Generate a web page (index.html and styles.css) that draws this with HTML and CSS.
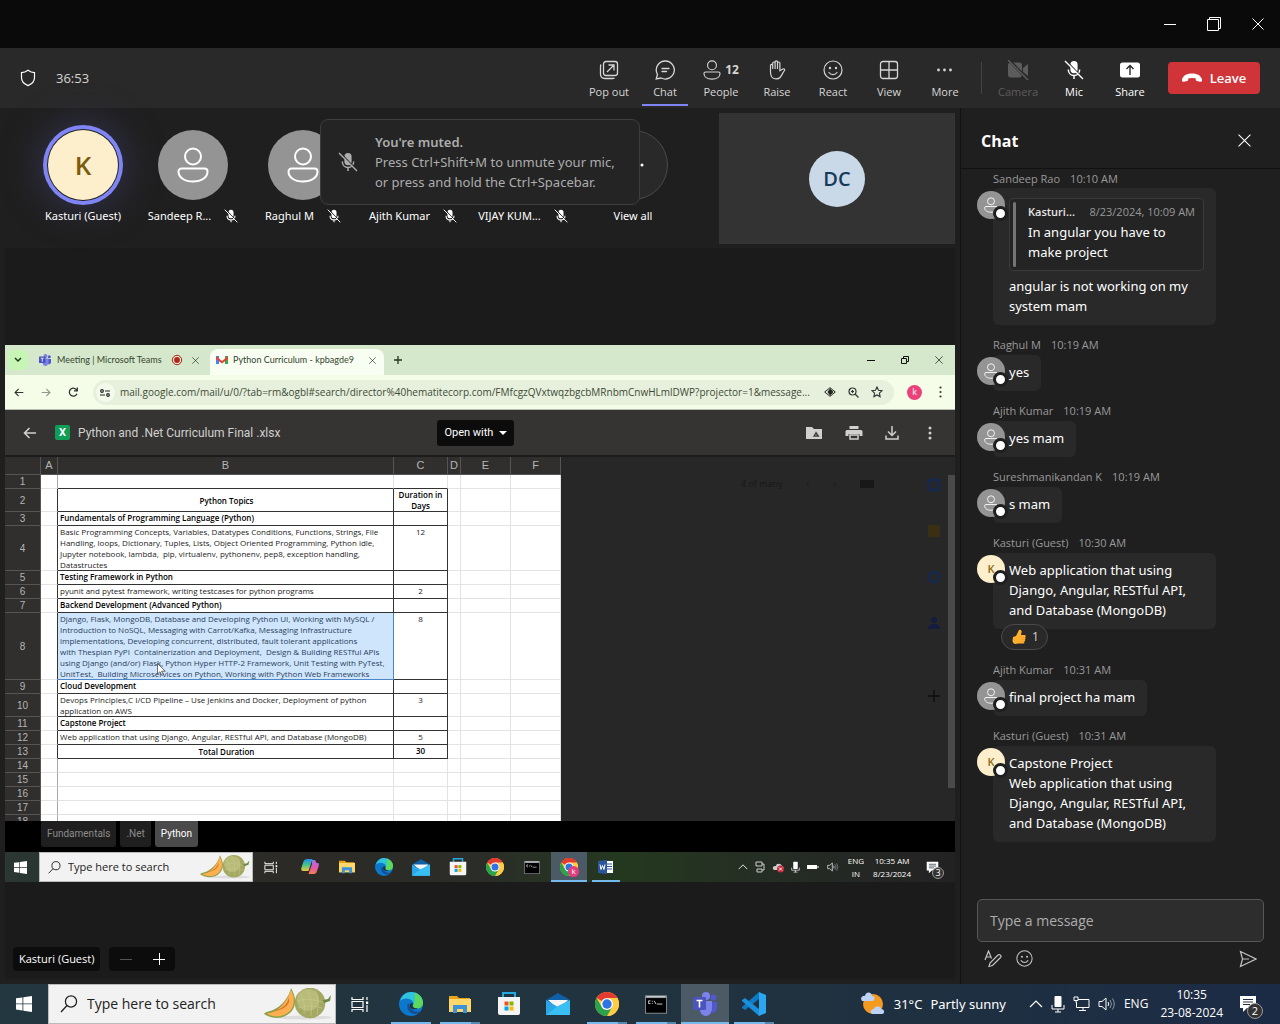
FILE: index.html
```html
<!DOCTYPE html>
<html lang="en">
<head>
<meta charset="utf-8">
<meta name="viewport" content="width=device-width, initial-scale=1">
<title>Meeting | Microsoft Teams</title>
<link rel="stylesheet" href="styles.css">
</head>
<body>
<svg class="defs" aria-hidden="true">
  <linearGradient id="cool" x2="0" y2="1"><stop offset="0" stop-color="#1f8fe8"/><stop offset=".5" stop-color="#45c58b"/><stop offset="1" stop-color="#f5c53a"/></linearGradient>
  <linearGradient id="warm" x2="0" y2="1"><stop offset="0" stop-color="#a66cf0"/><stop offset=".6" stop-color="#e858a5"/><stop offset="1" stop-color="#f5814d"/></linearGradient>
  <symbol id="person" viewBox="0 0 32 36"><circle cx="16" cy="9.500" r="8"/><path d="M4.500 21.500h23a3 3 0 0 1 3 3c0 6-6 10-14.500 10s-14.500-4-14.500-10a3 3 0 0 1 3-3z"/></symbol>
  <symbol id="mic-off" viewBox="0 0 20 20"><path d="M10 1a3.600 3.600 0 0 1 3.600 3.600v5A3.600 3.600 0 0 1 10 13.200a3.600 3.600 0 0 1-3.600-3.600v-5A3.600 3.600 0 0 1 10 1z" fill="currentColor"/><path d="M4.300 9.500c0 3.500 2.500 6 5.700 6s5.700-2.500 5.700-6M10 15.500V19" fill="none" stroke="currentColor" stroke-width="1.500"/><path d="M2 .5l17.500 18.500" class="gap-line"/><path d="M1 1l18 18" stroke="currentColor" stroke-width="1.400"/></symbol>
  <symbol id="smile" viewBox="0 0 20 20"><g fill="none" stroke="currentColor" stroke-width="1.200" stroke-linecap="round"><circle cx="10" cy="10" r="9"/><path d="M6 12.500c1 1.500 2.400 2.200 4 2.200s3-.7 4-2.200"/></g><circle cx="7" cy="8" r="1.200" fill="currentColor"/><circle cx="13" cy="8" r="1.200" fill="currentColor"/></symbol>
  <symbol id="cross" viewBox="0 0 12 12"><path d="M.5.5l11 11M11.500.5l-11 11" fill="none" stroke="currentColor"/></symbol>
  <symbol id="win" viewBox="0 0 16 16"><path d="M0 2.300l6.500-.9v6.100H0zM7.300 1.300L16 0v7.500H7.300zM0 8.300h6.500v6.200L0 13.600zM7.300 8.300H16V16l-8.700-1.300z" fill="#fff"/></symbol>
  <symbol id="search" viewBox="0 0 18 18"><g fill="none" stroke="currentColor" stroke-width="1.300"><circle cx="11" cy="6.500" r="5.600"/><path d="M7 10.500L1 17"/></g></symbol>
  <symbol id="melon" viewBox="0 0 68 32"><ellipse cx="40" cy="29.500" rx="28" ry="2" fill="#ddd"/><circle cx="46" cy="15" r="15.300" fill="#a3a862"/><circle cx="44" cy="12" r="11" fill="#b9bb79"/><path d="M36 6q6 8 4 20M43 2q6 9 4 26M51 2q5 9 2 25M33 13q12-4 25 1M34 20q12-4 24 0" fill="none" stroke="#c9ca8e" stroke-width=".6"/><path d="M59 12l5-1 3-4-1 6-6 2z" fill="#6c8a43"/><path d="M27 0c5 9 6 17 0 24-7 7-18 8-27 2 2-3 5-2 9-4C18 18 25 9 27 0z" fill="#8ba248"/><path d="M27 2c4 8 4 15-1 21-6 6-15 7-23 3 3-2 6-1 10-4 7-5 11-12 14-20z" fill="#ffaf51"/><path d="M25 7c0 8-5 14-19 17 8-1 16-3 19-10z" fill="#d9742b"/></symbol>
  <symbol id="taskview" viewBox="0 0 18 17"><path d="M1 1V3.500h11V1M1 16v-2.500h11V16M1 5.500h11v6H1zM16 1v3M16 9v7" fill="none" stroke="#fff" stroke-width="1.200"/><path d="M15 5.500h2.200v2.500H15z" fill="#fff"/></symbol>
  <symbol id="edge" viewBox="0 0 24 24"><circle cx="12" cy="12" r="12" fill="#0b78cc"/><path d="M1 9C3 3 7 0 12 0c7 0 12 5 12 10.500 0 4-3 6-6.500 6-3 0-4.500-1.500-3.500-3C17 9 8 3 1 9z" fill="#2fc3df"/><path d="M16 .7c5 2 8 6 8 10.300 0 3.500-3 5.500-6.500 5.500-3 0-4.500-1.500-3.500-3C17 9 15 5 16 .7z" fill="#5bd95c"/><path d="M9.500 11c-2.500 3-1 10 6 11 3 0 5-1 6-3-4 2-11 0-12-8z" fill="#174d91"/><path d="M14 12c-1.500 2 1 5 5 4.200-2 2-8 1.500-8.500-2.500 0-2.500 3-3.500 3.500-1.700z" fill="#203540"/></symbol>
  <symbol id="folder" viewBox="0 0 22 19"><path d="M0 1h8l2 2h11v13H0z" fill="#e7a51b"/><path d="M0 4h22v13H0z" fill="#ffd76a"/><path d="M4 18v-8h14v8h-4v-4H8v4z" fill="#3d93da"/></symbol>
  <symbol id="store" viewBox="0 0 24 24"><path d="M6 6V1h12v5" fill="none" stroke="#25a9e0" stroke-width="2"/><path d="M1 5h22v16a2 2 0 0 1-2 2H3a2 2 0 0 1-2-2z" fill="#f4f4f4"/><path d="M7.500 9.500h4v4h-4z" fill="#f25022"/><path d="M12.500 9.500h4v4h-4z" fill="#7fba00"/><path d="M7.500 14.500h4v4h-4z" fill="#00a4ef"/><path d="M12.500 14.500h4v4h-4z" fill="#ffb900"/></symbol>
  <symbol id="mail" viewBox="0 0 24 22"><path d="M0 7l12-7 12 7v4H0z" fill="#0f5fa9"/><path d="M2 7h20l-9 10z" fill="#f5f5f5"/><path d="M0 7l12 7 12-7v15H0z" fill="#29a7e8"/><path d="M0 22l12-9L24 7v15z" fill="#39bff2"/></symbol>
  <symbol id="chrome" viewBox="0 0 24 24"><circle cx="12" cy="12" r="12" fill="#fc4"/><path d="M12 12L1.600 6A12 12 0 0 1 22.400 6z" fill="#e33b2e"/><path d="M12 6h10.400A12 12 0 0 1 12 24l5.200-9z" fill="#fc4"/><path d="M1.600 6A12 12 0 0 0 12 24l5.200-9L12 18 6.800 15z" fill="#2ba24c"/><circle cx="12" cy="12" r="6" fill="#fff"/><circle cx="12" cy="12" r="4.700" fill="#2f74e6"/></symbol>
  <symbol id="console" viewBox="0 0 24 20"><path d="M0 0h24v20H0z" fill="#8b9095"/><path d="M1 3h22v16H1z" fill="#000"/><path d="M2 1.500h20" stroke="#dfe3e6"/><path d="M6 6H4v3h2M8 6v1M8 8.500v1M10 6l2 3.500M13 9.500h6" stroke="#ddd" fill="none"/></symbol>
  <symbol id="teams" viewBox="0 0 24 24"><circle cx="20.500" cy="5.500" r="3" fill="#5059c9"/><path d="M16 10h8v6c0 3-2 5-5 5z" fill="#5059c9"/><circle cx="13" cy="4" r="4" fill="#7b83eb"/><path d="M7 9h12v7c0 5-3 8-6 8s-6-2-6-7z" fill="#7b83eb"/><rect y="5" width="13" height="13" rx="1" fill="#4b53bc"/><path d="M3.500 8.500h6M6.500 8.500v7" stroke="#fff" stroke-width="1.600"/></symbol>
  <symbol id="vscode" viewBox="0 0 24 24"><path d="M17 0l7 3v18l-7 3z" fill="#2aa7ef"/><path d="M17 0v7L3 18l-3-2 0-1z" fill="#0f7ac4"/><path d="M17 24v-7L3 6 0 8v1z" fill="#1a8fdc"/></symbol>
  <symbol id="note" viewBox="0 0 18 18"><path d="M1 1h16v12H8l-4 4v-4H1z" fill="#fff"/><path d="M4 4.500h10M4 7h10M4 9.500h7" stroke="#22303e"/></symbol>
  <symbol id="mic" viewBox="0 0 14 18"><rect x="3.500" y="1" width="7" height="11" rx="1" fill="#fff"/><path d="M1 10v4h12v-4M7 14v3M4 17h6" fill="none" stroke="#fff"/></symbol>
  <symbol id="sound" viewBox="0 0 18 14"><path d="M1 4.500h3L8 1v12L4 9.500H1z" fill="none" stroke="#fff"/><path d="M10 5q1.500 2 0 4" fill="none" stroke="#fff"/><path d="M12 3q3 4 0 8M14.500 1.500q3.500 5.500 0 11" fill="none" stroke="#8b98a3"/></symbol>
  <symbol id="up" viewBox="0 0 14 8"><path d="M1 7l6-6 6 6" fill="none" stroke="#fff" stroke-width="1.200"/></symbol>
  <symbol id="back" viewBox="0 0 14 12"><path d="M13 6H1.500M6.500 1l-5 5 5 5" fill="none" stroke="currentColor" stroke-width="1.600"/></symbol>
</svg>

<header class="titlebar">
  <button class="win-btn" aria-label="Minimize"><svg width="12" height="12"><path d="M0 6.500h12" stroke="#fff"/></svg></button>
  <button class="win-btn" aria-label="Restore"><svg width="14" height="14"><path d="M.5 2.500h11v11H.5zM2.500 2.500v-2h11v11h-2" fill="none" stroke="#fff"/></svg></button>
  <button class="win-btn" aria-label="Close"><svg width="12" height="12"><use href="#cross"/></svg></button>
</header>

<nav class="toolbar" aria-label="Meeting controls">
  <svg width="16" height="18" viewBox="0 0 16 18"><path d="M8 1.200c2 1.500 4.200 2.300 6.500 2.400v5c0 4-2.500 6.500-6.500 8-4-1.500-6.500-4-6.500-8v-5C3.800 3.500 6 2.700 8 1.200z" fill="none" stroke="#fff" stroke-width="1.200"/></svg>
  <span class="timer">36:53</span>
  <div class="tools">
    <button class="tool"><svg width="20" height="20"><g fill="none" stroke="currentColor" stroke-width="1.300"><rect x="4.500" y="1.500" width="14" height="14" rx="2.500"/><path d="M2 4.500C1.500 5 1.500 6 1.500 7v7c0 3 1.500 4.500 4.500 4.500h7c1 0 2 0 2.500-.5M8 12l6.500-6.500M9.500 5h5.500v5.500"/></g></svg>Pop out</button>
    <button class="tool active"><svg width="20" height="20"><path d="M10.500 1a9 9 0 1 1-4.300 17L1.200 19l1.300-4.500A9 9 0 0 1 10.500 1zM7 8.500h7M7 11.500h4.500" fill="none" stroke="currentColor" stroke-width="1.300" stroke-linecap="round"/></svg>Chat</button>
    <button class="tool"><span class="tool-row"><svg width="18" height="20" class="line"><use href="#person"/></svg><b>12</b></span>People</button>
    <button class="tool"><svg width="20" height="20"><path d="M3.500 12V5.500c0-1.500 2.200-1.500 2.200 0V9 3.200c0-1.600 2.400-1.600 2.400 0V9 2c0-1.600 2.400-1.600 2.400 0v7V3.200c0-1.600 2.400-1.600 2.400 0v7.500l3-1.700c1.300-.6 2.200.5 1.600 1.500-2 2.700-2.800 5-4.500 7-1.600 1.800-6.500 1.900-8.200-.5-1-1.500-1.300-3-1.300-5z" fill="none" stroke="currentColor" stroke-width="1.200"/></svg>Raise</button>
    <button class="tool"><svg width="20" height="20"><use href="#smile"/></svg>React</button>
    <button class="tool"><svg width="20" height="20"><path d="M4 1.500h12A2.500 2.500 0 0 1 18.500 4v12a2.500 2.500 0 0 1-2.500 2.500H4A2.500 2.500 0 0 1 1.500 16V4A2.500 2.500 0 0 1 4 1.500zM10 1.500v17M1.500 10h17" fill="none" stroke="currentColor" stroke-width="1.300"/></svg>View</button>
    <button class="tool"><svg width="20" height="20" fill="currentColor"><circle cx="3.500" cy="10" r="1.400"/><circle cx="9.500" cy="10" r="1.400"/><circle cx="15.500" cy="10" r="1.400"/></svg>More</button>
    <span class="divider"></span>
    <button class="tool off" disabled><svg width="22" height="20" fill="currentColor"><rect x="1" y="2.500" width="14" height="15" rx="3"/><path d="M16 8l5-4v12l-5-4z"/><path d="M2 0l19 20" stroke="#292929" stroke-width="3"/><path d="M1 0l20 20" stroke="currentColor" stroke-width="1.400"/></svg>Camera</button>
    <button class="tool bright"><svg width="20" height="20"><use href="#mic-off"/></svg>Mic</button>
    <button class="tool bright"><svg width="20" height="20"><rect y="2.500" width="20" height="15" rx="2.500" fill="#fff"/><path d="M10 15V5.500M6.500 9L10 5.500 13.500 9" fill="none" stroke="#292929" stroke-width="1.400"/></svg>Share</button>
    <button class="leave"><svg width="20" height="10"><path d="M0 6.500C1 2 6 .5 10 .5s9 1.500 10 6c.2 1.800-.5 2.500-2 2.200l-3-.6c-1-.2-1.300-1-1.300-2.600C12 4.800 8 4.800 6.300 5.500 6.300 7 6 7.900 5 8.100l-3 .6C.5 9-.2 8.300 0 6.500z" fill="#fff"/></svg>Leave</button>
  </div>
</nav>

<div class="main">
  <main class="stage">
    <section class="strip" aria-label="Participants">
      <div class="roster">
        <div class="face"><span class="disc speaking">K</span><span class="who">Kasturi (Guest)</span></div>
        <div class="face"><span class="disc"><svg width="32" height="36" class="line"><use href="#person"/></svg></span><span class="who">Sandeep R...<svg width="14" height="14"><use href="#mic-off"/></svg></span></div>
        <div class="face"><span class="disc"><svg width="32" height="36" class="line"><use href="#person"/></svg></span><span class="who">Raghul M<svg width="14" height="14"><use href="#mic-off"/></svg></span></div>
        <div class="face"><span class="disc"><svg width="32" height="36" class="line"><use href="#person"/></svg></span><span class="who">Ajith Kumar<svg width="14" height="14"><use href="#mic-off"/></svg></span></div>
        <div class="face"><span class="disc"><svg width="32" height="36" class="line"><use href="#person"/></svg></span><span class="who">VIJAY KUM...<svg width="14" height="14"><use href="#mic-off"/></svg></span></div>
        <div class="face"><span class="disc all"><svg width="22" height="4" fill="#fff"><circle cx="2" cy="2" r="1.500"/><circle cx="11" cy="2" r="1.500"/><circle cx="20" cy="2" r="1.500"/></svg></span><span class="who">View all</span></div>
      </div>
      <div class="self"><span>DC</span></div>
      <div class="toast" role="status">
        <svg width="20" height="20"><use href="#mic-off"/></svg>
        <p><b>You're muted.</b><br>Press Ctrl+Shift+M to unmute your mic,<br>or press and hold the Ctrl+Spacebar.</p>
      </div>
    </section>

    <section class="share" aria-label="Shared screen">
      <div class="screen">
        <div class="tabs">
          <span class="tab-menu"><svg width="8" height="6"><path d="M1 1l3 3 3-3" fill="none" stroke="#1d3b17" stroke-width="1.500"/></svg></span>
          <div class="tab"><svg width="12" height="12"><use href="#teams"/></svg><span>Meeting | Microsoft Teams</span><svg width="12" height="12"><circle cx="6" cy="6" r="4.700" fill="none" stroke="#b3261e"/><circle cx="6" cy="6" r="2.900" fill="#b3261e"/></svg><svg class="x" width="7" height="7"><use href="#cross"/></svg></div>
          <div class="tab current"><svg width="12" height="10"><path d="M0 1h3v8H0z" fill="#4285f4"/><path d="M9 1h3v8H9z" fill="#34a853"/><path d="M0 1l6 5 6-5v3L6 8.500 0 4z" fill="#ea4335"/></svg><span>Python Curriculum - kpbagde9</span><svg class="x" width="7" height="7"><use href="#cross"/></svg></div>
          <svg width="8" height="8"><path d="M4 0v8M0 4h8" stroke="#26351f" stroke-width="1.300"/></svg>
          <div class="tab-win"><svg width="8" height="8"><path d="M0 4.500h8" stroke="#111"/></svg><svg width="8" height="8"><path d="M.5 2.500h5v5h-5zM2.500 2.500v-2h5v5h-2" fill="none" stroke="#111"/></svg><svg width="8" height="8"><use href="#cross"/></svg></div>
        </div>
        <div class="address">
          <svg width="10" height="9" viewBox="0 0 14 12"><use href="#back"/></svg>
          <svg class="flip" width="10" height="9" viewBox="0 0 14 12"><use href="#back"/></svg>
          <svg width="10" height="10"><path d="M9 3.500A4 4 0 1 0 9 6.800M9.300.5v3.300H6" fill="none" stroke="#333" stroke-width="1.300"/></svg>
          <div class="pill">
            <span class="site"><svg width="10" height="8"><g fill="none" stroke="#222" stroke-width="1.200"><circle cx="2" cy="2" r="1.300"/><circle cx="8" cy="6" r="1.300"/><path d="M5 2h5M0 6h5"/></g></svg></span>
            <span class="url">mail.google.com/mail/u/0/?tab=rm&amp;ogbl#search/director%40hematitecorp.com/FMfcgzQVxtwqzbgcbMRnbmCnwHLmlDWP?projector=1&amp;message...</span>
            <svg width="12" height="10"><path d="M.7 5L6 .7 11.300 5 6 9.300z" fill="none" stroke="#222"/><path d="M6 1.500L9.500 5 6 8.500 3.500 5z" fill="#222"/></svg>
            <svg width="11" height="11"><g fill="none" stroke="#333" stroke-width="1.200"><circle cx="4.500" cy="4.500" r="3.500"/><path d="M7 7l3.500 3.500M4.500 3v3M3 4.500h3"/></g></svg>
            <svg width="12" height="12"><path d="M6 1l1.500 3.300 3.500.4-2.600 2.400.7 3.500L6 8.900l-3.100 1.700.7-3.500L1 4.700l3.500-.4z" fill="none" stroke="#333" stroke-width="1.100"/></svg>
          </div>
          <span class="profile">k</span>
          <svg width="3" height="12" fill="#333"><circle cx="1.500" cy="1.500" r="1.100"/><circle cx="1.500" cy="6" r="1.100"/><circle cx="1.500" cy="10.500" r="1.100"/></svg>
        </div>
        <div class="viewer-bar">
          <svg width="14" height="12"><use href="#back"/></svg>
          <span class="xls">X</span>
          <span class="file">Python and .Net Curriculum Final .xlsx</span>
          <button class="open">Open with <svg width="8" height="4"><path d="M0 0h8L4 4z" fill="#fff"/></svg></button>
          <div class="viewer-tools">
            <svg width="18" height="14"><path d="M1 1h6l2 2h8v10H1z" fill="#d0d0d0"/><path d="M11 5l4 6H7.500zM11 8v2" fill="#353434" stroke="#d0d0d0" stroke-width=".6"/></svg>
            <svg width="18" height="14"><path d="M4.500 0h9v3h-9zM2 4h14a1.500 1.500 0 0 1 1.500 1.500V10h-3V8h-11v2H.5V5.500A1.500 1.500 0 0 1 2 4z" fill="#d0d0d0"/><path d="M5 9h8v4H5z" fill="none" stroke="#d0d0d0" stroke-width="1.500"/></svg>
            <svg width="14" height="14"><path d="M7 0v9M3 5.500l4 4 4-4M1 9.500V13h12V9.500" fill="none" stroke="#d0d0d0" stroke-width="1.500"/></svg>
            <svg width="18" height="14" fill="#d0d0d0"><circle cx="9" cy="2" r="1.500"/><circle cx="9" cy="7" r="1.500"/><circle cx="9" cy="12" r="1.500"/></svg>
          </div>
        </div>
        <div class="viewer">
          <div class="sheet">
            <table>
              <colgroup><col class="c0"><col class="ca"><col class="cb"><col class="cc"><col class="cd"><col class="ce"><col class="ce"></colgroup>
              <thead><tr><th></th><th>A</th><th>B</th><th>C</th><th>D</th><th>E</th><th>F</th></tr></thead>
              <tbody>
              <tr class="edge"><th>1</th><td></td><td></td><td></td><td></td><td></td><td></td></tr>
              <tr class="ink tall"><th>2</th><td></td><td class="mid bold">Python Topics</td><td class="bold">Duration in<br>Days</td><td></td><td></td><td></td></tr>
              <tr class="ink bold"><th>3</th><td></td><td>Fundamentals of Programming Language (Python)</td><td></td><td></td><td></td><td></td></tr>
              <tr class="ink"><th>4</th><td></td><td>Basic Programming Concepts, Variables, Datatypes Conditions, Functions, Strings, File
Handling, loops, Dictionary, Tuples, Lists, Object Oriented Programming, Python idle,
Jupyter notebook, lambda,  pip, virtualenv, pythonenv, pep8, exception handling,
Datastructes</td><td>12</td><td></td><td></td><td></td></tr>
              <tr class="ink bold"><th>5</th><td></td><td>Testing Framework in Python</td><td></td><td></td><td></td><td></td></tr>
              <tr class="ink"><th>6</th><td></td><td>pyunit and pytest framework, writing testcases for python programs</td><td>2</td><td></td><td></td><td></td></tr>
              <tr class="ink bold"><th>7</th><td></td><td>Backend Development (Advanced Python)</td><td></td><td></td><td></td><td></td></tr>
              <tr class="ink"><th>8</th><td></td><td class="picked">Django, Flask, MongoDB, Database and Developing Python UI, Working with MySQL /
Introduction to NoSQL, Messaging with Carrot/Kafka, Messaging Infrastructure
implementations, Developing concurrent, distributed, fault tolerant applications
with Thespian PyPI  Containerization and Deployment,  Design &amp; Building RESTful APIs
using Django (and/or) Flask, Python Hyper HTTP-2 Framework, Unit Testing with PyTest,
UnitTest,  Building Microservices on Python, Working with Python Web Frameworks<svg class="cursor" width="9" height="13"><path d="M.5.5v10.500l2.500-2.300 1.800 3.800 1.500-.8-1.700-3.500h3.700z" fill="#fff" stroke="#333" stroke-width=".7"/></svg></td><td>8</td><td></td><td></td><td></td></tr>
              <tr class="ink bold"><th>9</th><td></td><td>Cloud Development</td><td></td><td></td><td></td><td></td></tr>
              <tr class="ink"><th>10</th><td></td><td>Devops Principles,C I/CD Pipeline – Use Jenkins and Docker, Deployment of python
application on AWS</td><td>3</td><td></td><td></td><td></td></tr>
              <tr class="ink bold"><th>11</th><td></td><td>Capstone Project</td><td></td><td></td><td></td><td></td></tr>
              <tr class="ink"><th>12</th><td></td><td>Web application that using Django, Angular, RESTful API, and Database (MongoDB)</td><td>5</td><td></td><td></td><td></td></tr>
              <tr class="ink bold"><th>13</th><td></td><td class="mid">Total Duration</td><td>30</td><td></td><td></td><td></td></tr>
              <tr><th>14</th><td></td><td></td><td></td><td></td><td></td><td></td></tr>
              <tr><th>15</th><td></td><td></td><td></td><td></td><td></td><td></td></tr>
              <tr><th>16</th><td></td><td></td><td></td><td></td><td></td><td></td></tr>
              <tr><th>17</th><td></td><td></td><td></td><td></td><td></td><td></td></tr>
              <tr><th>18</th><td></td><td></td><td></td><td></td><td></td><td></td></tr>
              </tbody>
            </table>
          </div>
          <div class="behind">
            <div class="pager"><span>4 of many</span><span>‹</span><span>›</span><i></i></div>
            <div class="addons">
              <svg width="16" height="16"><path d="M3 3h10v10H3z" fill="none" stroke="#17284a" stroke-width="3"/></svg>
              <svg width="16" height="16"><path d="M2 2h12v12H2z" fill="#3a2f12"/></svg>
              <svg width="16" height="16"><circle cx="8" cy="8" r="5" fill="none" stroke="#15294a" stroke-width="3"/></svg>
              <svg width="16" height="16" fill="#141c40"><circle cx="8" cy="5" r="3"/><path d="M2 14c0-7 12-7 12 0z"/></svg>
              <svg class="plus" width="12" height="12"><path d="M6 0v12M0 6h12" stroke="#0c0c0d" stroke-width="1.300"/></svg>
            </div>
            <div class="scroll"></div>
          </div>
        </div>
        <div class="sheet-tabs"><button>Fundamentals</button><button>.Net</button><button class="on">Python</button></div>
        <div class="taskbar small">
          <span class="start"><svg width="13" height="13"><use href="#win"/></svg></span>
          <label class="find"><svg width="13" height="13"><use href="#search"/></svg><input type="text" placeholder="Type here to search" aria-label="Search shared desktop"><svg width="50" height="24"><use href="#melon"/></svg></label>
          <span class="app view"><svg width="14" height="13"><use href="#taskview"/></svg></span>
          <span class="app"><svg width="18" height="18"><path d="M10.500 2H14l1.500 3H17c1 0 1 2 .6 3.500l-2 5.500c-.5 1.500-2 2-3 2H7.500L11 6z" fill="url(#warm)"/><path d="M6 1h5.500L7.500 13H2C0 13 0 11 .5 9.500l2-6C3 2 4.500 1 6 1z" fill="url(#cool)"/></svg></span>
          <span class="app"><svg width="16" height="14"><use href="#folder"/></svg></span>
          <span class="app"><svg width="18" height="18"><use href="#edge"/></svg></span>
          <span class="app"><svg width="18" height="17"><use href="#mail"/></svg></span>
          <span class="app"><svg width="18" height="18"><use href="#store"/></svg></span>
          <span class="app"><svg width="18" height="18"><use href="#chrome"/></svg></span>
          <span class="app"><svg width="16" height="13"><use href="#console"/></svg></span>
          <span class="app on run"><svg width="18" height="18"><use href="#chrome"/></svg><i class="k">k</i></span>
          <span class="app run"><svg width="16" height="14"><path d="M7 1h8v12H7z" fill="#fff"/><path d="M9 4h5M9 6.500h5M9 9h5" stroke="#2b579a"/><path d="M0 1l9-1v14l-9-1z" fill="#2b579a"/><path d="M2 4.500l1 5 1.500-4L6 9.500l1-5" fill="none" stroke="#fff"/></svg></span>
          <div class="tray">
            <svg width="10" height="6"><use href="#up"/></svg>
            <svg width="10" height="12"><path d="M1 1h6v4H1zM2 8h5v3H2zM7 3h2v6H7" fill="none" stroke="#ccc"/></svg>
            <svg width="12" height="12"><path d="M1 8c-1-3 2-3 3-3 0-3 5-3 6 0 3 1 1 4 0 4H2z" fill="#ccc"/><circle cx="8.500" cy="8" r="3.500" fill="#c92a3b"/><path d="M7 6.500l3 3M10 6.500l-3 3" stroke="#fff"/></svg>
            <svg width="9" height="12"><use href="#mic"/></svg>
            <svg width="13" height="8"><path d="M0 2h10v4H0z" fill="#fff"/><path d="M11 3v2" stroke="#fff"/></svg>
            <svg width="12" height="10"><use href="#sound"/></svg>
            <span class="pair">ENG<br>IN</span>
            <span class="pair">10:35 AM<br>8/23/2024</span>
            <span class="alerts"><svg width="13" height="13"><use href="#note"/></svg><i>3</i></span>
          </div>
        </div>
      </div>
      <div class="share-foot"><span class="tag">Kasturi (Guest)</span><span class="zoom"><button aria-label="Zoom out" disabled><svg width="12" height="12"><path d="M0 6.500h12" stroke="#555"/></svg></button><button aria-label="Zoom in"><svg width="12" height="12"><path d="M0 6.500h12M6.500 0v12" stroke="#fff"/></svg></button></span></div>
    </section>
  </main>

  <aside class="chat">
    <header class="chat-head"><h2>Chat</h2><button aria-label="Close chat"><svg width="13" height="13"><use href="#cross"/></svg></button></header>
    <div class="log">
      <article class="msg"><p class="meta"><span>Sandeep Rao</span><time>10:10 AM</time></p><span class="ava"><svg width="14" height="16" class="line"><use href="#person"/></svg></span>
        <div class="bubble"><blockquote><p class="meta"><b>Kasturi...</b><time>8/23/2024, 10:09 AM</time></p>In angular you have to<br>make project</blockquote>angular is not working on my<br>system mam</div></article>
      <article class="msg"><p class="meta"><span>Raghul M</span><time>10:19 AM</time></p><span class="ava"><svg width="14" height="16" class="line"><use href="#person"/></svg></span><div class="bubble">yes</div></article>
      <article class="msg"><p class="meta"><span>Ajith Kumar</span><time>10:19 AM</time></p><span class="ava"><svg width="14" height="16" class="line"><use href="#person"/></svg></span><div class="bubble">yes mam</div></article>
      <article class="msg"><p class="meta"><span>Sureshmanikandan K</span><time>10:19 AM</time></p><span class="ava"><svg width="14" height="16" class="line"><use href="#person"/></svg></span><div class="bubble">s mam</div></article>
      <article class="msg"><p class="meta"><span>Kasturi (Guest)</span><time>10:30 AM</time></p><span class="ava k">K</span><div class="bubble wide">Web application that using<br>Django, Angular, RESTful API,<br>and Database (MongoDB)</div>
        <button class="react"><svg width="14" height="16"><path d="M1 8l3-1 3-6c2-1 3 1 2.500 2.500L9 6h3.500c1.500 0 1.500 2 .5 2.300 1 .4.700 2-.3 2.200.8.5.5 1.800-.5 2 .5.8 0 2-1.200 2H6C3 15.500 1 15 .5 12z" fill="#ffb02e"/><path d="M8.500 8.500h4M8.500 10.700h4M8.500 12.800h3.500" stroke="#f28c1d" stroke-width=".6"/></svg>1</button></article>
      <article class="msg"><p class="meta"><span>Ajith Kumar</span><time>10:31 AM</time></p><span class="ava"><svg width="14" height="16" class="line"><use href="#person"/></svg></span><div class="bubble">final project ha mam</div></article>
      <article class="msg"><p class="meta"><span>Kasturi (Guest)</span><time>10:31 AM</time></p><span class="ava k">K</span><div class="bubble wide">Capstone Project<br>Web application that using<br>Django, Angular, RESTful API,<br>and Database (MongoDB)</div></article>
    </div>
    <form class="compose">
      <input type="text" placeholder="Type a message" aria-label="Type a message">
      <div class="compose-tools">
        <button type="button" aria-label="Format"><svg width="18" height="18"><g fill="none" stroke="#c4c4c4" stroke-width="1.200"><path d="M1 10L4.500 1 7.500 8.500M2.300 7h4M5 16.500l1-3.500 8-8c1.500-1.300 4 .8 2.500 2.500L8.500 15.500z"/></g></svg></button>
        <button type="button" aria-label="Emoji"><svg width="17" height="17"><use href="#smile"/></svg></button>
        <button type="button" class="send" aria-label="Send"><svg width="18" height="18"><path d="M1.500 1.500l15.500 7.500-15.500 7.500 2-7.500zM3.500 9H10" fill="none" stroke="#c4c4c4" stroke-width="1.200"/></svg></button>
      </div>
    </form>
  </aside>
</div>

<footer class="taskbar">
  <span class="start"><svg width="16" height="16"><use href="#win"/></svg></span>
  <label class="find"><svg width="18" height="18"><use href="#search"/></svg><input type="text" placeholder="Type here to search" aria-label="Search"><svg width="68" height="32"><use href="#melon"/></svg></label>
  <span class="app view"><svg width="18" height="17"><use href="#taskview"/></svg></span>
  <span class="app run"><svg width="24" height="24"><use href="#edge"/></svg></span>
  <span class="app run many"><svg width="22" height="19"><use href="#folder"/></svg></span>
  <span class="app"><svg width="24" height="24"><use href="#store"/></svg></span>
  <span class="app"><svg width="24" height="22"><use href="#mail"/></svg></span>
  <span class="app run many"><svg width="24" height="24"><use href="#chrome"/></svg></span>
  <span class="app run many"><svg width="22" height="19"><use href="#console"/></svg></span>
  <span class="app run on"><svg width="24" height="24"><use href="#teams"/></svg></span>
  <span class="app run many"><svg width="24" height="24"><use href="#vscode"/></svg></span>
  <div class="tray">
    <span class="weather"><svg width="26" height="24"><circle cx="13" cy="12" r="10" fill="#f39a1f"/><path d="M2 9c-3-4 2-6 3-5 1-5 7-4 7 0 4 0 3 5 0 5z" fill="#bcd3f7"/><path d="M12 22c-3-3 0-5 2-5 1-4 7-3 7 0 4 0 4 5 1 5z" fill="#bcd3f7"/></svg><span>31°C</span><span>Partly sunny</span></span>
    <svg width="14" height="8"><use href="#up"/></svg>
    <svg width="14" height="18"><use href="#mic"/></svg>
    <svg width="17" height="16"><path d="M5 3.500h11v8H3.500V6M10 11.500v3M6 14.500h7M1 1h4v3.500H1zM3 4.500v2" fill="none" stroke="#fff"/></svg>
    <svg width="18" height="14"><use href="#sound"/></svg>
    <span class="lang">ENG</span>
    <span class="clock">10:35<br>23-08-2024</span>
    <span class="alerts"><svg width="18" height="18"><use href="#note"/></svg><i>2</i></span>
  </div>
</footer>
</body>
</html>
```
FILE: styles.css
```css
*, *::before, *::after { box-sizing: border-box; }
body { margin: 0; min-height: 100vh; display: flex; flex-direction: column; background: #1f1f1f; color: #fff; font: 13px/20px "Open Sans", "Noto Sans", sans-serif; }
button, input { font: inherit; color: inherit; background: none; border: 0; padding: 0; }
svg { flex: none; display: block; }
p, h2, blockquote { margin: 0; }
i { font-style: normal; }
.defs { position: absolute; width: 0; height: 0; }
.line { fill: none; stroke: currentColor; stroke-width: 2; }
.gap-line { stroke: #242424; stroke-width: 1.5; }

.titlebar { display: flex; justify-content: flex-end; height: 48px; background: #0a0a0a; }
.win-btn { width: 44px; display: flex; align-items: center; justify-content: center; }

/* meeting toolbar */
.toolbar { display: flex; align-items: center; height: 60px; padding: 0 20px; background: #292929; color: #d6d6d6; }
.timer { margin-left: 20px; }
.tools { display: flex; align-items: center; margin-left: auto; }
.tool { width: 56px; height: 60px; padding-top: 12px; display: flex; flex-direction: column; align-items: center; gap: 2px; font-size: 11px; position: relative; }
.tool.active::after { content: ""; position: absolute; bottom: 2px; left: 5px; width: 46px; height: 2px; background: #7f85f5; }
.tool.off { color: #5c5c5c; }
.tool.bright { color: #fff; }
.tool-row { display: flex; gap: 4px; height: 20px; }
.tool-row b { font-size: 12px; }
.divider { width: 1px; height: 32px; margin: 0 8px; background: #454545; }
.leave { display: flex; align-items: center; justify-content: center; gap: 8px; width: 92px; height: 32px; margin-left: 10px; border-radius: 4px; background: #d13438; color: #fff; font-weight: 600; }

.main { flex: 1; display: flex; }
.stage { flex: 1; min-width: 0; padding: 5px; display: flex; flex-direction: column; gap: 4px; }
.strip { position: relative; display: flex; justify-content: space-between; height: 131px; }
.roster { display: flex; padding: 17px 0 0 23px; }
.face { width: 110px; display: flex; flex-direction: column; align-items: center; gap: 6px; }
.disc { width: 70px; height: 70px; border-radius: 50%; background: #949494; display: flex; align-items: center; justify-content: center; }
.disc.speaking { background: #fdefcb; color: #7d5a0c; font-size: 26px; font-weight: 600; box-shadow: 0 0 0 1px #222, 0 0 0 5px #7f85f5, 0 0 36px 8px #34334f; }
.disc.all { background: #292929; border: 1px solid #4a4a4a; }
.who { display: flex; align-items: center; gap: 13px; font-family: "Noto Sans", sans-serif; font-size: 11px; white-space: nowrap; }
.self { width: 236px; background: #333; display: flex; align-items: center; justify-content: center; }
.self span { width: 56px; height: 56px; line-height: 56px; text-align: center; border-radius: 50%; background: #c9d9e8; color: #17395a; font-size: 20px; font-weight: 600; }
.toast { position: absolute; left: 315px; top: 6px; width: 320px; height: 86px; padding: 12px 17px; display: flex; align-items: center; gap: 17px; background: #242424; border: 1px solid #3d3d3d; border-radius: 8px; color: #adadad; font-family: "Noto Sans", sans-serif; white-space: nowrap; }
.toast b { font-weight: 600; }

/* shared screen */
.share { flex: 1; display: grid; grid-template-rows: 1fr auto 1fr; background: #1b1b1b; }
.screen { grid-row: 2; min-width: 0; }
.share-foot { grid-row: 3; display: flex; align-self: end; gap: 9px; padding: 8px; }
.tag, .zoom { height: 24px; border-radius: 4px; background: #0c0c0c; }
.tag { padding: 2px 6px; font-size: 11px; font-weight: 500; }
.zoom { display: flex; width: 66px; }
.zoom button { flex: 1; display: flex; align-items: center; justify-content: center; }

.tabs { display: flex; align-items: center; height: 30px; padding: 0 12px 0 3px; background: #d6e8cb; color: #35442e; font: 9px/20px Lato, "Open Sans", sans-serif; }
.tab-menu { width: 20px; height: 20px; padding: 7px 6px; border-radius: 6px; background: #c7f5b5; }
.tab { display: flex; align-items: center; width: 182px; gap: 6px; padding: 0 11px; white-space: nowrap; }
.tab span { flex: 1; }
.tab.current { width: 174px; height: 26px; align-self: flex-end; padding: 0 8px 4px 6px; gap: 5px; margin-right: 10px; background: #f8fef2; border-radius: 8px 8px 0 0; }
.x { margin-left: 3px; color: #111; }
.tab-win { display: flex; gap: 26px; margin-left: auto; color: #111; }
.address { display: flex; align-items: center; height: 35px; gap: 17px; padding: 0 13px 0 9px; background: #f5fde9; color: #333; border-bottom: 1px solid #b9beb2; }
.flip { transform: rotate(180deg); opacity: .5; }
.pill { flex: 1; min-width: 0; display: flex; align-items: center; gap: 12px; height: 25px; margin: 0 -4px 0 -2px; padding: 0 11px 0 3px; border-radius: 13px; background: #e6f0dc; color: #3f4a38; font-size: 10px; }
.site { width: 19px; height: 19px; padding: 6px 4px; border-radius: 50%; background: #f3faec; }
.url { flex: 1; margin-left: -7px; white-space: nowrap; overflow: hidden; }
.profile { width: 15px; height: 15px; border-radius: 50%; background: #ec407a; color: #fff; font-size: 9px; line-height: 14px; text-align: center; }
.viewer-bar { display: flex; align-items: center; height: 47px; padding: 0 16px 0 18px; background: #353432; border-bottom: 2px solid #1b1b1b; color: #d0d0d0; font: 11px/20px Roboto, sans-serif; }
.xls { width: 15px; height: 15px; margin: 0 8px 0 18px; border-radius: 2px; background: #0f9d58; color: #fff; font-weight: 700; line-height: 15px; text-align: center; }
.file { font-size: 12px; }
.open { display: flex; align-items: center; gap: 6px; margin-left: 157px; padding: 3px 7px; background: #0c0c0c; color: #fff; border-radius: 3px; }
.viewer-tools { display: flex; gap: 22px; margin-left: auto; }

.viewer { display: flex; height: 364px; overflow: hidden; background: #282728; }
table { width: 556px; table-layout: fixed; border-collapse: separate; border-spacing: 0; }
.c0 { width: 36px; } .ca { width: 17px; } .cb { width: 336px; } .cc { width: 54px; } .cd { width: 13px; } .ce { width: 50px; }
th { padding: 0; background: #302f2e; color: #b5b5b5; border-right: 1px solid #555; border-bottom: 1px solid #555; font: 10px/13px "Liberation Sans", sans-serif; }
thead th { height: 18px; font-size: 11px; line-height: 17px; }
td { height: 14px; padding: 0; background: #fff; color: #222; border-right: 1px solid #e3e3e6; border-bottom: 1px solid #e3e3e6; font: 8px/11px "Open Sans", "Noto Sans", sans-serif; vertical-align: top; white-space: pre; }
td:nth-child(3) { padding-left: 2px; }
td:nth-child(2) { border-right-color: #aaa; }
td:nth-child(4) { text-align: center; }
.bold td, td.bold { font-weight: 600; color: #000; }
.edge td:nth-child(3), .edge td:nth-child(4) { border-bottom-color: #333; }
.ink td:nth-child(2) { border-right-color: #333; }
.ink td:nth-child(3), .ink td:nth-child(4) { border-color: #333; }
.tall td { height: 23px; }
td.mid { text-align: center; vertical-align: middle; }
td.picked { position: relative; background: #cfe5fb; color: #28415c; border-color: #4a86c8 !important; }
.cursor { position: absolute; left: 99px; bottom: 3px; }
.behind { flex: 1; display: flex; color: #161616; }
.pager { flex: 1; display: flex; justify-content: flex-end; gap: 24px; padding: 17px 52px 0 0; font-size: 9px; line-height: 20px; }
.pager i { width: 14px; height: 8px; margin-top: 6px; background: #181818; }
.addons { display: flex; flex-direction: column; align-items: center; gap: 30px; padding: 20px 6px 0 0; }
.plus { margin-top: 29px; }
.scroll { width: 7px; height: 313px; margin-top: 18px; background: #4a4a4b; }
.sheet-tabs { display: flex; gap: 4px; height: 31px; padding: 0 0 5px 36px; background: #000; color: #8c8c8c; font: 10px/20px Roboto, sans-serif; }
.sheet-tabs button { padding: 0 6px; background: #1f1f1f; border-radius: 0 0 3px 3px; }
.sheet-tabs .on { background: #4a4a4a; color: #fff; }

/* taskbars */
.taskbar { display: flex; height: 40px; background: linear-gradient(90deg, #22373f, #20323f 60%, #1c2b45); }
.start { width: 48px; display: flex; align-items: center; justify-content: center; }
.find { width: 288px; display: flex; align-items: center; gap: 9px; padding: 0 3px 0 11px; background: #f2f2f2; border: 1px solid #bbb; color: #222; font-size: 14px; }
.find input { flex: 1; min-width: 0; }
::placeholder { color: inherit; opacity: 1; }
.app { width: 48px; margin-right: 1px; display: flex; align-items: center; justify-content: center; position: relative; }
.app.view { margin-right: 3px; }
.app.run::after { content: ""; position: absolute; bottom: 0; left: 4px; right: 4px; height: 2px; background: #76b9ed; }
.app.many::after { background: linear-gradient(90deg, #76b9ed 78%, #5689b0 78%); }
.app.on { background: #4b5a64; }
.app.on::after { left: 0; right: 0; }
.tray { display: flex; align-items: center; gap: 8px; margin-left: auto; padding-right: 23px; white-space: nowrap; }
.weather { display: flex; align-items: center; gap: 8px; margin-right: 15px; font-family: "Noto Sans", sans-serif; }
.lang, .clock { font-size: 12px; }
.lang { margin-right: 4px; }
.clock { line-height: 18px; text-align: center; }
.alerts { position: relative; margin-left: 8px; }
.alerts i { position: absolute; left: 8px; top: 8px; width: 16px; height: 16px; border: 1px solid #999; border-radius: 50%; background: #333; font-size: 11px; line-height: 14px; text-align: center; }
.small { height: 30px; background: linear-gradient(90deg, #2a3733, #2c2a26 30%, #2b2d28 50%, #24381f 65%, #252a25 85%, #222); }
.small .start { width: 34px; padding-right: 3px; }
.small .find { width: 214px; padding: 0 2px 0 8px; gap: 7px; font-size: 11px; }
.small .app { width: 36px; }
.small .k { position: absolute; left: 17px; top: 14px; width: 11px; height: 11px; border-radius: 50%; background: #e23d7c; font-size: 8px; line-height: 10px; text-align: center; }
.small .tray { gap: 7px; padding-right: 16px; }
.pair { margin-left: 2px; font-size: 8px; line-height: 13px; text-align: center; }
.small .alerts i { left: 6px; top: 6px; width: 12px; height: 12px; font-size: 9px; line-height: 10px; }

/* chat */
.chat { width: 320px; display: flex; flex-direction: column; border-left: 1px solid #111; background: #1f1f1f; }
.chat-head { display: flex; align-items: center; justify-content: space-between; height: 61px; padding: 5px 29px 0 20px; border-bottom: 1px solid #111; }
.chat-head h2 { font-size: 16px; }
.log { flex: 1; padding: 0 16px 0 32px; }
.msg { position: relative; margin-bottom: 10px; }
.meta { display: flex; gap: 10px; color: #999; font: 11px/20px "Open Sans", "Noto Sans", sans-serif; white-space: nowrap; }
.log > .msg > .meta { height: 19px; }
.log > .msg + .msg > .meta { height: 20px; }
.ava { position: absolute; left: -16px; top: 22px; width: 28px; height: 28px; border-radius: 50%; background: #949494; display: flex; align-items: center; justify-content: center; }
.ava.k { background: #fdefcb; color: #8a6a14; font-size: 11px; font-weight: 600; }
.ava::after { content: ""; position: absolute; right: -3px; bottom: -2px; width: 15px; height: 15px; border: 3px solid #1f1f1f; border-radius: 50%; background: #fff; }
.bubble { width: fit-content; max-width: 223px; padding: 7px 12px 9px 16px; background: #292929; border-radius: 6px; font-family: "Noto Sans", sans-serif; white-space: nowrap; }
.bubble.wide { width: 223px; }
blockquote { position: relative; width: 195px; height: 73px; margin: 3px 0 5px; padding: 3px 8px 5px 18px; background: #242424; border: 1px solid #3a3a3a; border-radius: 4px; }
blockquote::before { content: ""; position: absolute; left: 3px; top: 3px; width: 3px; height: 65px; border-radius: 2px; background: #757575; }
blockquote .meta { justify-content: space-between; gap: 0; }
blockquote b { color: #e6e6e6; font-weight: 600; }
.react { display: flex; align-items: center; gap: 6px; position: relative; height: 26px; margin: -5px 0 0 8px; padding: 0 8px 0 10px; background: #292929; border: 1px solid #4a4a4a; border-radius: 13px; color: #d6d6d6; font-size: 12px; }
.compose { padding: 0 16px 9px; color: #c4c4c4; }
.compose input { width: 100%; height: 43px; padding: 0 12px; background: #2d2d2d; border: 1px solid #575757; border-radius: 5px; color: #adadad; font-size: 14px; }
.compose-tools { display: flex; align-items: center; height: 33px; padding: 0 7px; gap: 14px; }
.send { margin-left: auto; }
```
